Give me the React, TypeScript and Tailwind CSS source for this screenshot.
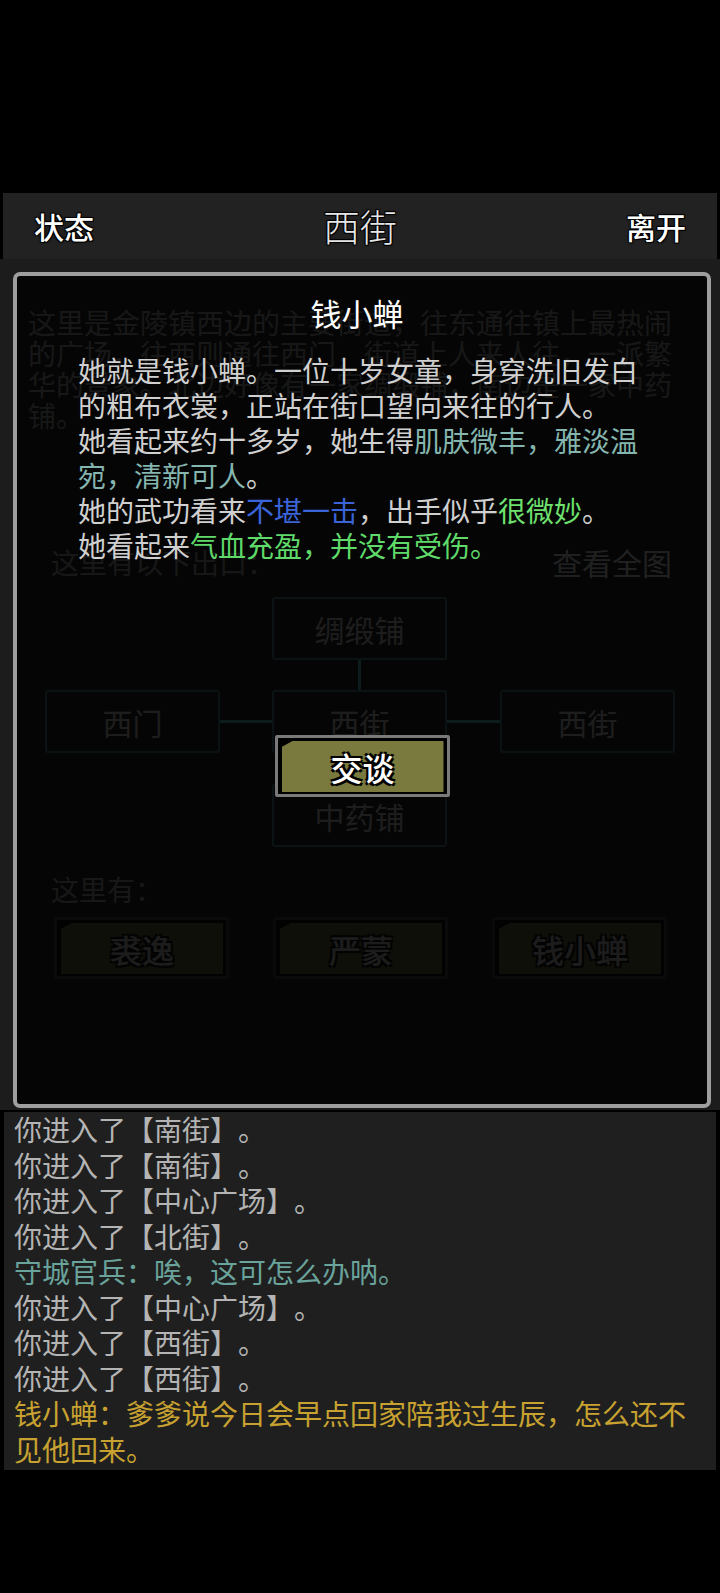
import React from "react";

const FONT = "font-['Noto_Sans_CJK_SC','Noto_Sans',sans-serif]";

function OliveButton({ label, dim }: { label: string; dim?: boolean }) {
  return (
    <div
      className={
        dim
          ? "w-[175px] h-[62px] shrink-0 rounded-[2px] border-[3px] border-[#4a4a4a] bg-black pt-[3px] pl-[4px] pr-[3px] pb-[2px] opacity-50"
          : "w-[175px] h-[62px] shrink-0 rounded-[2px] border-[3px] border-[#7a7a7a] bg-black pt-[3px] pl-[4px] pr-[3px] pb-[2px]"
      }
    >
      <div className="w-full h-full bg-[#7b7a3e] [clip-path:polygon(11px_0,100%_0,100%_100%,0_100%,0_6px)] flex items-center justify-center">
        <span className="text-white text-[32px] leading-none font-medium [text-shadow:-2px_-2px_0_#000,2px_-2px_0_#000,-2px_2px_0_#000,2px_2px_0_#000,0_0_3px_#000]">
          {label}
        </span>
      </div>
    </div>
  );
}

function MapBox({ label }: { label: string }) {
  return (
    <div className="w-full h-full border-2 border-[#33595e] rounded-[3px] flex items-center justify-center text-[30px] leading-none text-[#939393]">
      {label}
    </div>
  );
}

function VLine() {
  return (
    <div className="w-full h-full flex justify-center">
      <div className="w-[3px] h-full bg-[#3f8a8f]" />
    </div>
  );
}

function HLine() {
  return (
    <div className="w-full h-full flex items-center">
      <div className="h-[3px] w-full bg-[#3f8a8f]" />
    </div>
  );
}

export default function App() {
  return (
    <div className={"w-[720px] min-h-[1593px] bg-black [text-spacing-trim:space-all] " + FONT}>
      <div className="h-[193px]" />
      {/* Header */}
      <div className="mx-[3px] h-[66px] bg-[#222222] flex items-center justify-between pl-[31px] pr-[31px]">
        <span className="text-white text-[30px] leading-none font-medium [text-shadow:-1px_-1px_0_#000,1px_-1px_0_#000,-1px_1px_0_#000,1px_1px_0_#000,0_0_3px_#000]">
          状态
        </span>
        <span className="text-[#e6e6e6] text-[37px] leading-none font-light [text-shadow:-1px_-1px_0_#000,1px_-1px_0_#000,-1px_1px_0_#000,1px_1px_0_#000,0_0_3px_#000]">
          西街
        </span>
        <span className="text-white text-[30px] leading-none font-medium [text-shadow:-1px_-1px_0_#000,1px_-1px_0_#000,-1px_1px_0_#000,1px_1px_0_#000,0_0_3px_#000]">
          离开
        </span>
      </div>

      {/* Page content (dimmed behind modal) */}
      <div className="relative h-[851px] bg-[#1c1c1c] pt-[48px] px-[28px]">
        <p className="w-[664px] text-[28px] leading-[31px] text-[#747474]">
          这里是金陵镇西边的主要街道，往东通往镇上最热闹的广场，往西则通往西门，街道上人来人往，一派繁华的景象。北边好像有一家绸缎铺，南边是一家中药铺。
        </p>
        <div className="mt-[111px] ml-[23px] mr-[20px] flex justify-between items-center h-[40px]">
          <span className="text-[28px] leading-[40px] text-[#747474]">这里有以下出口：</span>
          <span className="text-[30px] leading-[40px] text-[#a0a0a0]">查看全图</span>
        </div>
        <div className="mt-[15px] ml-[17px] grid grid-cols-[175px_52px_175px_53px_175px] grid-rows-[63px_30px_63px_31px_63px]">
          <div />
          <div />
          <MapBox label="绸缎铺" />
          <div />
          <div />

          <div />
          <div />
          <VLine />
          <div />
          <div />

          <MapBox label="西门" />
          <HLine />
          <MapBox label="西街" />
          <HLine />
          <MapBox label="西街" />

          <div />
          <div />
          <VLine />
          <div />
          <div />

          <div />
          <div />
          <MapBox label="中药铺" />
          <div />
          <div />
        </div>
        <div className="mt-[22px] ml-[23px] text-[28px] leading-[40px] text-[#747474]">这里有：</div>
        <div className="mt-[8px] ml-[26px] flex gap-[44px]">
          <OliveButton label="裘逸" dim />
          <OliveButton label="严蒙" dim />
          <OliveButton label="钱小蝉" dim />
        </div>

        {/* Modal */}
        <div className="absolute left-[13px] top-[13px] w-[698px] h-[836px] border-[4px] border-[#9e9e9e] rounded-[7px] bg-black/80 flex flex-col items-center">
          <div className="mt-[17px] mr-[10px] text-[31px] leading-[40px] text-white">钱小蝉</div>
          <div className="mt-[20px] w-[568px] text-[28px] leading-[35px] text-[#d0d0d0]">
            <p>她就是钱小蝉。一位十岁女童，身穿洗旧发白的粗布衣裳，正站在街口望向来往的行人。</p>
            <p>
              她看起来约十多岁，她生得<span className="text-[#84b5ae]">肌肤微丰，雅淡温宛，清新可人</span>。
            </p>
            <p>
              她的武功看来<span className="text-[#3a64d8]">不堪一击</span>，出手似乎
              <span className="text-[#6ee06e]">很微妙</span>。
            </p>
            <p>
              她看起来<span className="text-[#5fda6a]">气血充盈，并没有受伤。</span>
            </p>
          </div>
          <div className="mt-[172px]">
            <OliveButton label="交谈" />
          </div>
        </div>
      </div>

      {/* Log */}
      <div className="mx-[4px] mt-[2px] h-[358px] bg-[#1f1f1f] pl-[10px] pr-[10px] text-[28px] leading-[35.5px] text-[#b4b4b4]">
        <div>你进入了【南街】。</div>
        <div>你进入了【南街】。</div>
        <div>你进入了【中心广场】。</div>
        <div>你进入了【北街】。</div>
        <div className="text-[#6aa39b]">守城官兵：唉，这可怎么办呐。</div>
        <div>你进入了【中心广场】。</div>
        <div>你进入了【西街】。</div>
        <div>你进入了【西街】。</div>
        <div className="text-[#c8a230]">钱小蝉：爹爹说今日会早点回家陪我过生辰，怎么还不见他回来。</div>
      </div>
    </div>
  );
}
